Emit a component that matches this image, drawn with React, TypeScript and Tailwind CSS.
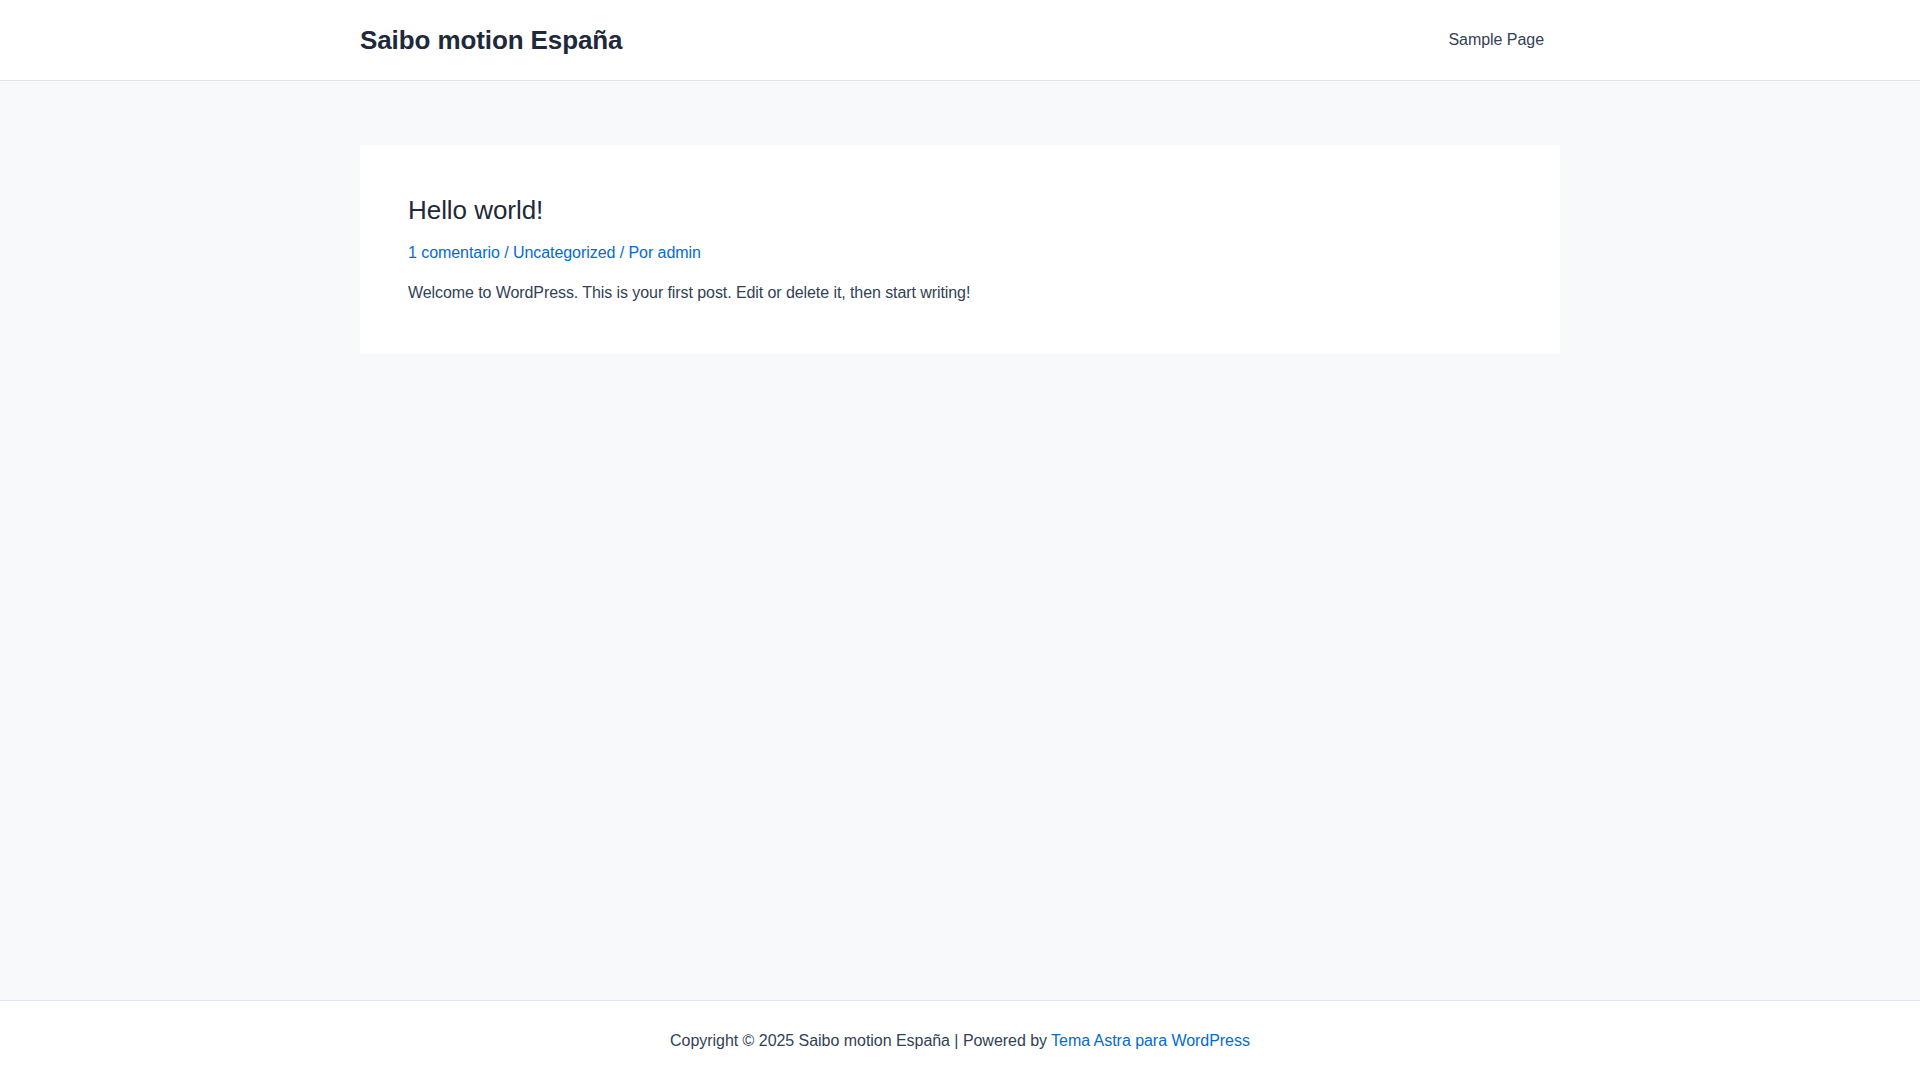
export default function App() {
  return (
    <div className="flex min-h-screen flex-col bg-[#f8f9fa] font-['Liberation_Sans',Arial,sans-serif] text-[#334155]">
      <header className="h-[81px] shrink-0 border-b border-[#e2e5ea] bg-white">
        <div className="mx-auto flex h-20 w-[1200px] items-center justify-between">
          <a href="#" className="text-[26px] font-bold leading-none tracking-[-0.1px] text-[#1e293b]">
            Saibo motion España
          </a>
          <nav>
            <a href="#" className="block px-4 text-base tracking-[-0.05px] text-[#334155]">
              Sample Page
            </a>
          </nav>
        </div>
      </header>

      <main className="flex-1 pt-16">
        <article className="mx-auto w-[1200px] bg-white px-12 pb-12 pt-12">
          <h2 className="text-[26px] leading-[35px] tracking-[-0.05px] text-[#1e293b]">
            <a href="#">Hello world!</a>
          </h2>
          <div className="mt-3 text-base leading-[26px] tracking-[-0.06px] text-[#046bd2]">
            <a href="#">1 comentario</a> / <a href="#">Uncategorized</a> / Por{' '}
            <a href="#">admin</a>
          </div>
          <p className="mt-[14px] text-base leading-[26px] tracking-[-0.08px] text-[#334155]">
            Welcome to WordPress. This is your first post. Edit or delete it, then start writing!
          </p>
        </article>
      </main>

      <footer className="flex h-20 shrink-0 items-center justify-center border-t border-[#dfe5ee] bg-white text-base tracking-[-0.04px] text-[#334155]">
        <p>
          Copyright © 2025 Saibo motion España | Powered by{' '}
          <a href="#" className="text-[#046bd2]">
            Tema Astra para WordPress
          </a>
        </p>
      </footer>
    </div>
  )
}
